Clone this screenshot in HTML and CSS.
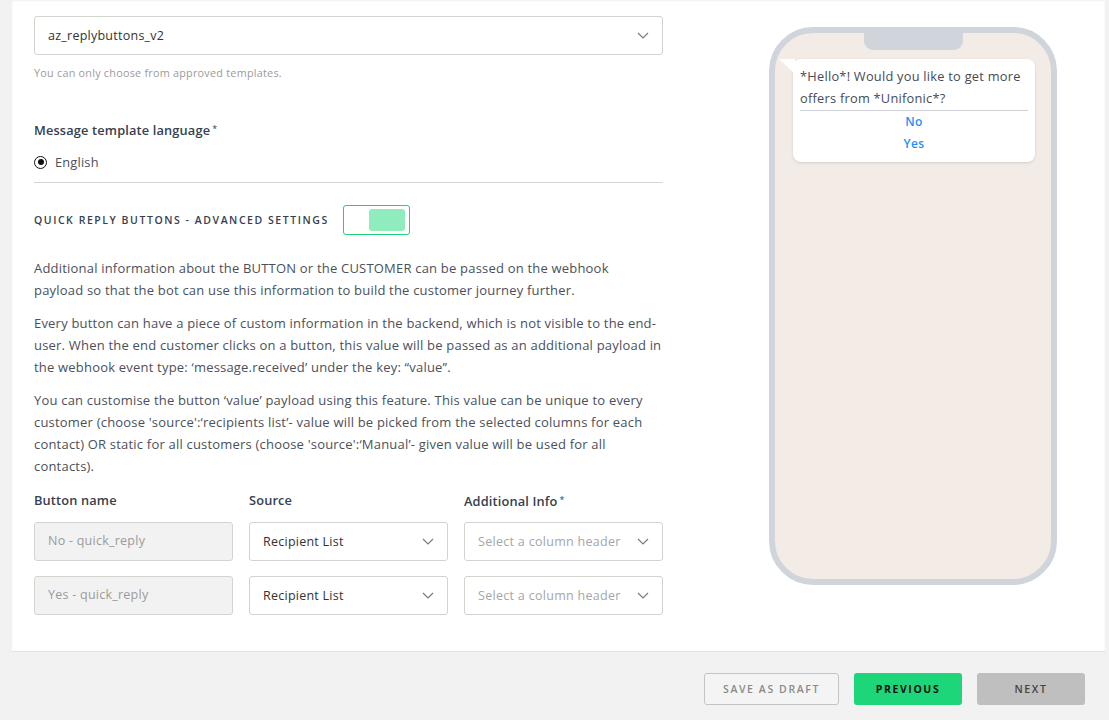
FILE: index.html
```html
<!DOCTYPE html>
<html>
<head>
<meta charset="utf-8">
<link rel="stylesheet" href="styles.css">
</head>
<body>
<div class="app">
  <div class="card">
    <div class="form">
      <div class="select big">
        <span class="val">az_replybuttons_v2</span>
        <svg class="chev" width="12" height="7" viewBox="0 0 12 7"><path d="M1 1 L6 6 L11 1" fill="none" stroke="#7a7a7a" stroke-width="1.2"/></svg>
      </div>
      <div class="hint">You can only choose from approved templates.</div>
      <div class="label lang">Message template language<sup>*</sup></div>
      <div class="radio-row"><span class="radio"></span><span>English</span></div>
      <div class="divider"></div>
      <div class="adv-row">
        <span class="adv-title">QUICK REPLY BUTTONS - ADVANCED SETTINGS</span>
        <span class="toggle"><span class="knob"></span></span>
      </div>
      <p class="para p1">Additional information about the BUTTON or the CUSTOMER can be passed on the webhook<br>payload so that the bot can use this information to build the customer journey further.</p>
      <p class="para">Every button can have a piece of custom information in the backend, which is not visible to the end-<br>user. When the end customer clicks on a button, this value will be passed as an additional payload in<br>the webhook event type: ‘message.received’ under the key: “value”.</p>
      <p class="para">You can customise the button ‘value’ payload using this feature. This value can be unique to every<br>customer (choose 'source':‘recipients list’- value will be picked from the selected columns for each<br>contact) OR static for all customers (choose 'source':‘Manual’- given value will be used for all<br>contacts).</p>
      <div class="grid">
        <div class="label">Button name</div>
        <div class="label">Source</div>
        <div class="label">Additional Info<sup>*</sup></div>

        <div class="field disabled">No - quick_reply</div>
        <div class="field select"><span class="val">Recipient List</span><svg class="chev" width="12" height="7" viewBox="0 0 12 7"><path d="M1 1 L6 6 L11 1" fill="none" stroke="#7a7a7a" stroke-width="1.2"/></svg></div>
        <div class="field select"><span class="ph">Select a column header</span><svg class="chev" width="12" height="7" viewBox="0 0 12 7"><path d="M1 1 L6 6 L11 1" fill="none" stroke="#7a7a7a" stroke-width="1.2"/></svg></div>

        <div class="field disabled">Yes - quick_reply</div>
        <div class="field select"><span class="val">Recipient List</span><svg class="chev" width="12" height="7" viewBox="0 0 12 7"><path d="M1 1 L6 6 L11 1" fill="none" stroke="#7a7a7a" stroke-width="1.2"/></svg></div>
        <div class="field select"><span class="ph">Select a column header</span><svg class="chev" width="12" height="7" viewBox="0 0 12 7"><path d="M1 1 L6 6 L11 1" fill="none" stroke="#7a7a7a" stroke-width="1.2"/></svg></div>
      </div>
    </div>
    <div class="preview">
      <div class="phone">
        <div class="notch"></div>
        <div class="bubble">
          <span class="tail"></span>
          <div class="msg">*Hello*! Would you like to get more offers from *Unifonic*?</div>
          <div class="btn-opt">No</div>
          <div class="btn-opt">Yes</div>
        </div>
      </div>
    </div>
  </div>
  <div class="footer">
    <button class="fbtn draft">SAVE AS DRAFT</button>
    <button class="fbtn prev">PREVIOUS</button>
    <button class="fbtn next">NEXT</button>
  </div>
</div>
</body>
</html>
```

FILE: styles.css
```css
* { box-sizing: border-box; }
html, body { margin: 0; padding: 0; }
body {
  background: #f2f2f2;
  font-family: "Open Sans", "DejaVu Sans", sans-serif;
  color: #4b505b;
  width: 1109px;
  height: 720px;
  overflow: hidden;
}
.app { display: flex; flex-direction: column; height: 720px; }
.card {
  height: 652px;
  margin: 0 4px 0 12px;
  background: #fff;
  border-bottom: 1px solid #e2e2e2;
  box-shadow: 0 1px 2px rgba(0,0,0,0.06) inset;
  display: flex;
}
.form {
  width: 651px;
  padding: 16px 0 0 22px;
}
.select {
  display: flex;
  align-items: center;
  justify-content: space-between;
  border: 1px solid #d4d4cf;
  border-radius: 3px;
  background: #fff;
}
.big { height: 39px; padding: 0 13px 0 13px; }
.val { font-size: 12.5px; letter-spacing: 0.25px; color: #333; }
.ph { font-size: 12.5px; letter-spacing: 0.3px; color: #a3a6ab; }
.chev { flex: none; }
.hint { margin-top: 10px; font-size: 10.8px; letter-spacing: 0.25px; line-height: 16px; color: #9b9b9b; }
.label {
  font-size: 12.8px;
  line-height: 18px;
  font-weight: 600;
  letter-spacing: 0.15px;
  color: #36404e;
}
.label sup { font-size: 9px; vertical-align: 3px; margin-left: 2px; font-weight: 400; }
.lang { margin-top: 39px; }
.radio-row {
  margin-top: 14px;
  display: flex;
  align-items: center;
  gap: 8px;
  font-size: 12.8px;
  letter-spacing: 0.2px;
  line-height: 18px;
  color: #4b505b;
}
.radio {
  width: 13px; height: 13px;
  border: 1.5px solid #111;
  border-radius: 50%;
  display: flex; align-items: center; justify-content: center;
}
.radio::after { content: ""; width: 6px; height: 6px; background: #111; border-radius: 50%; }
.divider { margin-top: 11px; height: 1px; background: #d6d6d6; }
.adv-row { margin-top: 22px; display: flex; align-items: center; height: 30px; }
.adv-title {
  font-size: 10.5px;
  font-weight: 600;
  letter-spacing: 1.55px;
  color: #36404e;
}
.toggle {
  margin-left: 14px;
  width: 67px; height: 30px;
  border: 1px solid #22d07a;
  border-radius: 3px;
  display: flex; justify-content: flex-end; align-items: center;
  padding-right: 4px;
}
.knob { width: 36px; height: 22px; background: #8eecbd; border-radius: 3px; }
.para {
  margin: 11px 0 0 0;
  font-size: 13px;
  letter-spacing: 0.2px;
  line-height: 22px;
  color: #4b505b;
  white-space: nowrap;
}
.p1 { margin-top: 22px; }
.grid {
  margin-top: 14px;
  display: grid;
  grid-template-columns: 199px 199px 199px;
  column-gap: 16px;
  row-gap: 15px;
}
.grid .label { margin-bottom: -3px; }
.field {
  height: 39px;
  border: 1px solid #d4d4cf;
  border-radius: 3px;
  padding: 0 13px;
  font-size: 12.5px;
}
.disabled {
  background: #f2f2f2;
  color: #9b9b9b;
  letter-spacing: 0.25px;
  display: flex; align-items: center;
  padding-bottom: 2px;
}
.preview { padding: 27px 0 0 106px; }
.phone {
  position: relative;
  width: 288px; height: 558px;
  border: 6px solid #d0d5dc;
  border-radius: 44px;
  background: #f3ebe5;
  padding: 26px 16px 0 18px;
}
.notch {
  position: absolute;
  top: -1px; left: 89px;
  width: 99px; height: 18px;
  background: #d0d5dc;
  border-radius: 0 0 9px 9px;
}
.bubble {
  position: relative;
  background: #fff;
  border-radius: 8px;
  box-shadow: 0 1px 3px rgba(0,0,0,0.12);
  padding: 6px 7px 7px 7px;
}
.tail {
  position: absolute;
  left: -14px; top: 0;
  width: 16px; height: 15px;
  background: #fff;
  clip-path: polygon(0 0, 100% 0, 100% 100%);
}
.msg { font-size: 12.8px; letter-spacing: 0.25px; line-height: 22px; color: #464b55; padding-bottom: 1px; border-bottom: 1px solid #cfd2d6; }
.btn-opt { text-align: center; font-size: 12px; line-height: 22px; color: #1e8fff; font-weight: 600; letter-spacing: 0.3px; }
.footer {
  flex: 1;
  display: flex;
  justify-content: flex-end;
  align-items: flex-start;
  padding: 21px 24px 0 0;
  gap: 15px;
}
.fbtn {
  height: 32px;
  width: 108px;
  border-radius: 3px;
  font-family: inherit;
  font-size: 10.5px;
  font-weight: 600;
  letter-spacing: 1.6px;
  border: none;
  cursor: pointer;
}
.draft { width: 135px; background: #f4f4f4; border: 1px solid #c4c4c4; color: #8a8a8a; }
.prev { background: #1ed67a; color: #111; font-weight: 700; }
.next { background: #bfbfbf; color: #444; }
```
